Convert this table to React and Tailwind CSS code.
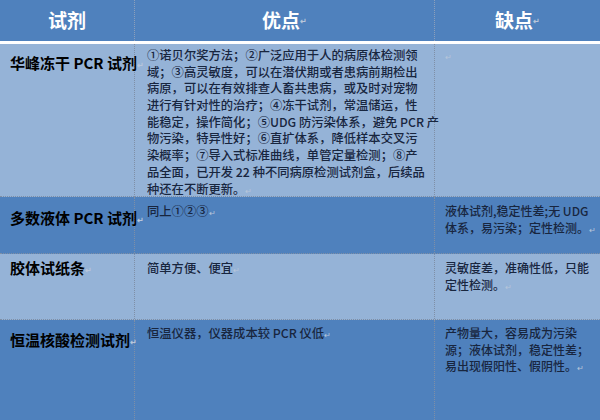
import React from "react";

const FONT = { fontFamily: '"Noto Sans CJK SC", "Noto Sans", sans-serif' };

const rows = [
  {
    name: "华峰冻干 PCR 试剂",
    bg: "bg-[#95b3d7]",
    h: "h-[153px]",
    namePad: "pt-[10px]",
    textPad: "pt-[3px]",
    pros: [
      "①诺贝尔奖方法；②广泛应用于人的病原体检测领",
      "域；③高灵敏度，可以在潜伏期或者患病前期检出",
      "病原，可以在有效排查人畜共患病，或及时对宠物",
      "进行有针对性的治疗；④冻干试剂，常温储运，性",
      "能稳定，操作简化；⑤UDG 防污染体系，避免 PCR 产",
      "物污染，特异性好；⑥直扩体系，降低样本交叉污",
      "染概率；⑦导入式标准曲线，单管定量检测；⑧产",
      "品全面，已开发 22 种不同病原检测试剂盒，后续品",
      "种还在不断更新。",
    ],
    cons: [""],
  },
  {
    name: "多数液体 PCR 试剂",
    bg: "bg-[#4f81bd]",
    h: "h-[57px]",
    namePad: "pt-[12px]",
    textPad: "pt-[6px]",
    pros: ["同上①②③"],
    cons: ["液体试剂,稳定性差;无 UDG", "体系，易污染；定性检测。"],
  },
  {
    name: "胶体试纸条",
    bg: "bg-[#95b3d7]",
    h: "h-[66px]",
    namePad: "pt-[5px]",
    textPad: "pt-[6px]",
    pros: ["简单方便、便宜"],
    cons: ["灵敏度差，准确性低，只能", "定性检测。"],
  },
  {
    name: "恒温核酸检测试剂",
    bg: "bg-[#4f81bd]",
    h: "flex-1",
    namePad: "pt-[11px]",
    textPad: "pt-[5px]",
    pros: ["恒温仪器，仪器成本较 PCR 仪低"],
    cons: ["产物量大，容易成为污染", "源；液体试剂，稳定性差；", "易出现假阳性、假阴性。"],
  },
];

function Mark() {
  return <span className="text-[8px] leading-none text-[#b8c6da] align-middle">↵</span>;
}

function Lines({ lines, size }) {
  return (
    <div className={`${size} leading-[16.7px] font-medium text-[#18263f]`}>
      {lines.map((l, i) => (
        <div key={i} className="whitespace-nowrap h-[16.7px] overflow-visible">
          {l}
          {i === lines.length - 1 && <Mark />}
        </div>
      ))}
    </div>
  );
}

export default function App() {
  return (
    <div className="w-[600px] h-[420px] overflow-hidden flex flex-col bg-[#4f81bd]" style={FONT}>
      <div className="grid grid-cols-[135px_300px_1fr] h-[41px] bg-[#4f81bd] text-white font-bold text-[19px]">
        <div className="flex items-center justify-center border-r border-dotted border-[#8c9fba]">试剂</div>
        <div className="flex items-center justify-center border-r border-dotted border-[#8c9fba]">
          优点<Mark />
        </div>
        <div className="flex items-center justify-center">
          缺点<Mark />
        </div>
      </div>
      <div className="h-[3px] bg-white" />
      <div className="flex-1 flex flex-col">
        {rows.map((r, i) => (
          <div
            key={i}
            className={`grid grid-cols-[135px_300px_1fr] ${r.bg} ${r.h} ${
              i < rows.length - 1 ? "border-b border-dotted border-[#7f8fa6]" : ""
            }`}
          >
            <div className={`border-r border-dotted border-[#7f8fa6] pl-[10px] ${r.namePad}`}>
              <div className="text-[15px] leading-[18px] font-bold text-black whitespace-nowrap">
                {r.name}
                <Mark />
              </div>
            </div>
            <div className={`border-r border-dotted border-[#7f8fa6] pl-[12px] ${r.textPad}`}>
              <Lines lines={r.pros} size="text-[12.3px]" />
            </div>
            <div className={`pl-[10px] ${r.textPad}`}>
              <Lines lines={r.cons} size="text-[12px]" />
            </div>
          </div>
        ))}
      </div>
    </div>
  );
}
